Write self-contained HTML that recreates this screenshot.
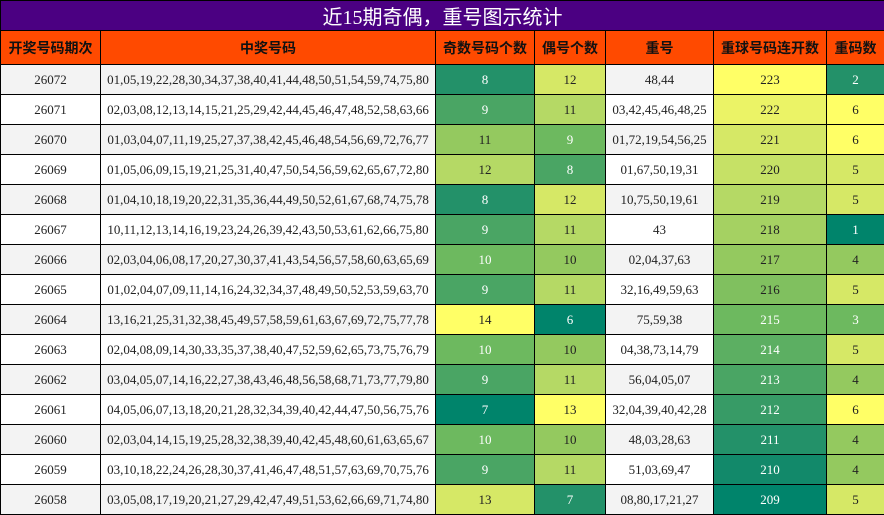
<!DOCTYPE html>
<html><head><meta charset="utf-8"><style>
body{margin:0;background:#fff}
table{border-collapse:collapse;table-layout:fixed;width:884px;font-family:"Liberation Serif","Noto Serif CJK SC",serif;font-size:13px;color:#222}
td,th{border:1px solid #000;text-align:center;padding:0;white-space:nowrap;overflow:hidden}
.t td{background:#4b0082;color:#fff;font-family:"Liberation Serif","Noto Sans CJK SC",sans-serif;font-size:20px;height:28px}
th{background:#ff4a00;font-family:"Liberation Sans","Noto Sans CJK SC",sans-serif;font-size:14px;font-weight:bold;color:#111;height:33px}
tr.r td{height:29px}
tr.a td.g{background:#f3f3f3}
tr.b td.g{background:#fff}
.w{color:#fff}
.L0{background:#00846b}.L1{background:#239169}.L2{background:#4aa564}.L3{background:#6db95f}.L4{background:#94c95f}.L5{background:#b5d965}.L6{background:#d6e866}.L7{background:#ffff66}
.c209{background:#00846b}.c210{background:#12896a}.c211{background:#239169}.c212{background:#379b66}.c213{background:#4aa564}.c214{background:#5caf62}.c215{background:#6db95f}.c216{background:#80c05f}.c217{background:#94c95f}.c218{background:#a5d162}.c219{background:#b5d965}.c220{background:#c6e166}.c221{background:#d6e866}.c222{background:#ebf366}.c223{background:#ffff66}
</style></head><body>
<table>
<colgroup><col style="width:100px"><col style="width:335px"><col style="width:99px"><col style="width:71px"><col style="width:108px"><col style="width:113px"><col style="width:58px"></colgroup>
<tr class="t"><td colspan="7">近15期奇偶，重号图示统计</td></tr>
<tr><th>开奖号码期次</th><th>中奖号码</th><th>奇数号码个数</th><th>偶号个数</th><th>重号</th><th>重球号码连开数</th><th>重码数</th></tr>
<tr class="r a"><td class="g">26072</td><td class="g">01,05,19,22,28,30,34,37,38,40,41,44,48,50,51,54,59,74,75,80</td><td class="L1 w">8</td><td class="L6">12</td><td class="g">48,44</td><td class="c223">223</td><td class="L1 w">2</td></tr>
<tr class="r b"><td class="g">26071</td><td class="g">02,03,08,12,13,14,15,21,25,29,42,44,45,46,47,48,52,58,63,66</td><td class="L2 w">9</td><td class="L5">11</td><td class="g">03,42,45,46,48,25</td><td class="c222">222</td><td class="L7">6</td></tr>
<tr class="r a"><td class="g">26070</td><td class="g">01,03,04,07,11,19,25,27,37,38,42,45,46,48,54,56,69,72,76,77</td><td class="L4">11</td><td class="L3 w">9</td><td class="g">01,72,19,54,56,25</td><td class="c221">221</td><td class="L7">6</td></tr>
<tr class="r b"><td class="g">26069</td><td class="g">01,05,06,09,15,19,21,25,31,40,47,50,54,56,59,62,65,67,72,80</td><td class="L5">12</td><td class="L2 w">8</td><td class="g">01,67,50,19,31</td><td class="c220">220</td><td class="L6">5</td></tr>
<tr class="r a"><td class="g">26068</td><td class="g">01,04,10,18,19,20,22,31,35,36,44,49,50,52,61,67,68,74,75,78</td><td class="L1 w">8</td><td class="L6">12</td><td class="g">10,75,50,19,61</td><td class="c219">219</td><td class="L6">5</td></tr>
<tr class="r b"><td class="g">26067</td><td class="g">10,11,12,13,14,16,19,23,24,26,39,42,43,50,53,61,62,66,75,80</td><td class="L2 w">9</td><td class="L5">11</td><td class="g">43</td><td class="c218">218</td><td class="L0 w">1</td></tr>
<tr class="r a"><td class="g">26066</td><td class="g">02,03,04,06,08,17,20,27,30,37,41,43,54,56,57,58,60,63,65,69</td><td class="L3 w">10</td><td class="L4">10</td><td class="g">02,04,37,63</td><td class="c217">217</td><td class="L4">4</td></tr>
<tr class="r b"><td class="g">26065</td><td class="g">01,02,04,07,09,11,14,16,24,32,34,37,48,49,50,52,53,59,63,70</td><td class="L2 w">9</td><td class="L5">11</td><td class="g">32,16,49,59,63</td><td class="c216">216</td><td class="L6">5</td></tr>
<tr class="r a"><td class="g">26064</td><td class="g">13,16,21,25,31,32,38,45,49,57,58,59,61,63,67,69,72,75,77,78</td><td class="L7">14</td><td class="L0 w">6</td><td class="g">75,59,38</td><td class="c215 w">215</td><td class="L3 w">3</td></tr>
<tr class="r b"><td class="g">26063</td><td class="g">02,04,08,09,14,30,33,35,37,38,40,47,52,59,62,65,73,75,76,79</td><td class="L3 w">10</td><td class="L4">10</td><td class="g">04,38,73,14,79</td><td class="c214 w">214</td><td class="L6">5</td></tr>
<tr class="r a"><td class="g">26062</td><td class="g">03,04,05,07,14,16,22,27,38,43,46,48,56,58,68,71,73,77,79,80</td><td class="L2 w">9</td><td class="L5">11</td><td class="g">56,04,05,07</td><td class="c213 w">213</td><td class="L4">4</td></tr>
<tr class="r b"><td class="g">26061</td><td class="g">04,05,06,07,13,18,20,21,28,32,34,39,40,42,44,47,50,56,75,76</td><td class="L0 w">7</td><td class="L7">13</td><td class="g">32,04,39,40,42,28</td><td class="c212 w">212</td><td class="L7">6</td></tr>
<tr class="r a"><td class="g">26060</td><td class="g">02,03,04,14,15,19,25,28,32,38,39,40,42,45,48,60,61,63,65,67</td><td class="L3 w">10</td><td class="L4">10</td><td class="g">48,03,28,63</td><td class="c211 w">211</td><td class="L4">4</td></tr>
<tr class="r b"><td class="g">26059</td><td class="g">03,10,18,22,24,26,28,30,37,41,46,47,48,51,57,63,69,70,75,76</td><td class="L2 w">9</td><td class="L5">11</td><td class="g">51,03,69,47</td><td class="c210 w">210</td><td class="L4">4</td></tr>
<tr class="r a"><td class="g">26058</td><td class="g">03,05,08,17,19,20,21,27,29,42,47,49,51,53,62,66,69,71,74,80</td><td class="L6">13</td><td class="L1 w">7</td><td class="g">08,80,17,21,27</td><td class="c209 w">209</td><td class="L6">5</td></tr>
</table>
</body></html>
